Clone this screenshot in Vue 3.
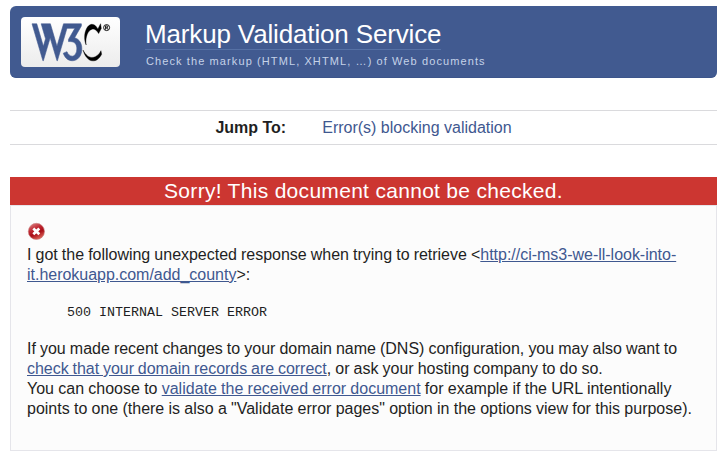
<script setup>
const site = 'http://ci-ms3-we-ll-look-into-it.herokuapp.com/add_county'
</script>

<template>
  <div class="page">
    <header class="banner">
      <div class="logo">
        <svg class="mark" viewBox="0 0 81 39" width="81" height="39" aria-label="W3C">
          <path fill="#415a90" stroke="#415a90" stroke-width=".5" transform="translate(-.3 -.35) scale(1.142 1.148)" d="M18.117,1.006l5.759,19.58l5.759-19.58h15.614v1.946l-5.879,10.128c2.065,0.663,3.627,1.868,4.686,3.615c1.059,1.748,1.589,3.799,1.589,6.155c0,2.914-0.775,5.363-2.324,7.348s-3.555,2.978-6.017,2.978c-1.854,0-3.469-0.589-4.845-1.767c-1.377-1.178-2.396-2.773-3.058-4.786l3.256-1.35c0.477,1.218,1.106,2.178,1.887,2.879c0.781,0.702,1.701,1.052,2.76,1.052c1.112,0,2.052-0.622,2.82-1.866c0.768-1.245,1.152-2.74,1.152-4.489c0-1.933-0.411-3.429-1.231-4.488c-0.954-1.244-2.45-1.867-4.489-1.867h-1.588v-1.906l5.56-9.612h-6.712l-0.382,0.65l-8.163,27.548h-0.397l-5.958-19.937l-5.957,19.937h-0.397L2.032,1.006h4.17l5.759,19.58l1.914-6.5l-3.834-13.08H18.117z" />
          <g transform="translate(-4.4 -.4) scale(1.12 1.13)" stroke="#000" stroke-width=".35">
            <path d="M66.92,1.006l0.676,4.11l-2.393,4.578c0,0-0.919-1.943-2.446-3.019c-1.287-0.907-2.125-1.104-3.435-0.833c-1.684,0.347-3.592,2.36-4.425,4.841c-0.997,2.97-1.007,4.406-1.042,5.726c-0.056,2.117,0.278,3.368,0.278,3.368s-1.454-2.691-1.44-6.632c0.009-2.813,0.451-5.364,1.753-7.881c1.145-2.214,2.846-3.542,4.356-3.698c1.561-0.161,2.795,0.591,3.748,1.406c1.001,0.855,2.014,2.726,2.014,2.726L66.92,1.006z" />
            <path d="M67.296,24.903c0,0-1.058,1.892-1.718,2.62c-0.659,0.729-1.839,2.013-3.296,2.655c-1.457,0.642-2.221,0.763-3.661,0.625c-1.439-0.138-2.776-0.971-3.244-1.318c-0.468-0.347-1.665-1.37-2.342-2.324c-0.676-0.955-1.734-2.863-1.734-2.863s0.589,1.912,0.958,2.724c0.212,0.467,0.864,1.894,1.789,3.136c0.863,1.159,2.539,3.154,5.086,3.604c2.547,0.451,4.297-0.693,4.73-0.97c0.433-0.277,1.346-1.042,1.924-1.66c0.603-0.645,1.174-1.468,1.49-1.962c0.231-0.36,0.607-1.092,0.607-1.092L67.296,24.903z" />
          </g>
          <circle cx="76.6" cy="4.6" r="3" fill="none" stroke="#000" stroke-width=".9" />
          <path fill="none" stroke="#000" stroke-width=".9" d="M75.6,6.6V2.9h1.2a.9,.9 0 0 1 0,1.9h-1.2M76.7,4.8l1.2,1.7" />
        </svg>
      </div>
      <div class="titles">
        <h1>Markup Validation Service</h1>
        <p>Check the markup (HTML, XHTML, …) of Web documents</p>
      </div>
    </header>

    <nav class="jump">
      <strong>Jump To:</strong>
      <a>Error(s) blocking validation</a>
    </nav>

    <h2>Sorry! This document cannot be checked.</h2>
    <main class="fatal">
      <svg class="error" width="18" height="18" viewBox="0 0 18 18" aria-label="Error">
        <defs>
          <linearGradient id="ball" x1="0" y1="0" x2=".5" y2="1">
            <stop offset="0" stop-color="#e09090" />
            <stop offset=".45" stop-color="#bf2630" />
            <stop offset=".7" stop-color="#a80e18" />
            <stop offset="1" stop-color="#d65a50" />
          </linearGradient>
        </defs>
        <circle cx="9.4" cy="9.4" r="8.1" fill="url(#ball)" stroke="#c98080" stroke-width=".6" />
        <path d="M6.3 6.5l6 5.8M12.3 6.5l-6 5.8" stroke="#fff" stroke-width="2.7" />
      </svg>
      <p>I got the following unexpected response when trying to retrieve &lt;<a class="link">{{ site }}</a>&gt;:</p>
      <pre>500 INTERNAL SERVER ERROR</pre>
      <p>If you made recent changes to your domain name (DNS) configuration, you may also want to <a class="link dns">check that your domain records are correct</a>, or ask your hosting company to do so.</p>
      <p class="choice">You can choose to <a class="link">validate the received error document</a> for example if the URL intentionally points to one (there is also a "Validate error pages" option in the options view for this purpose).</p>
    </main>
  </div>
</template>

<style>
body { background: #fff; }
</style>

<style scoped>
.page {
  width: 707px;
  padding: 6px 0 0 10px;
  font: 16px/20px "Liberation Sans", Arial, sans-serif;
  color: #1f1f23;
}
.banner {
  display: flex;
  box-sizing: border-box;
  height: 72px;
  padding: 11px;
  background: #415a90;
  border-bottom: 1px solid #3c558b;
  border-radius: 6px 0 6px 6px;
}
.logo {
  box-sizing: border-box;
  width: 99px;
  height: 50px;
  padding: 6px 0 0 9px;
  border-radius: 4px;
  background: linear-gradient(#fff, #ececec);
}
.mark { display: block; }
.titles { padding: 2px 0 0 25px; }
h1 {
  width: max-content;
  margin: 0;
  font-size: 26px;
  line-height: 30px;
  font-weight: 400;
  letter-spacing: -.15px;
  color: #fff;
  border-bottom: 1px solid #5671a5;
}
.titles p {
  margin: 4px 0 0 1px;
  font-size: 11px;
  line-height: 15px;
  letter-spacing: 1.1px;
  color: #c5d2e8;
}
.jump {
  display: flex;
  justify-content: center;
  gap: 36px;
  margin-top: 32px;
  padding: 7px 0 6px;
  border-top: 1px solid #dadadd;
  border-bottom: 1px solid #dadadd;
}
.jump a { color: #3f5890; }
h2 {
  margin: 32px 0 0;
  height: 28px;
  font-size: 21px;
  line-height: 28px;
  font-weight: 400;
  letter-spacing: .3px;
  text-align: center;
  color: #fff;
  background: #cc3631;
}
.fatal {
  box-sizing: border-box;
  height: 246px;
  padding: 16px 16px 0;
  border: 1px solid #e5e5ea;
  background: #fcfcfc;
}
.error { display: block; margin-bottom: 5px; }
.fatal p {
  margin: 0;
  letter-spacing: -.02px;
  word-spacing: -.3px;
}
.fatal .choice {
  letter-spacing: 0;
  word-spacing: -.2px;
}
.link { color: #3f5890; text-decoration: underline; }
.dns { word-spacing: -.6px; }
pre {
  margin: 18px 40px 16px;
  font: 13.333px/20px "Liberation Mono", monospace;
}
</style>
